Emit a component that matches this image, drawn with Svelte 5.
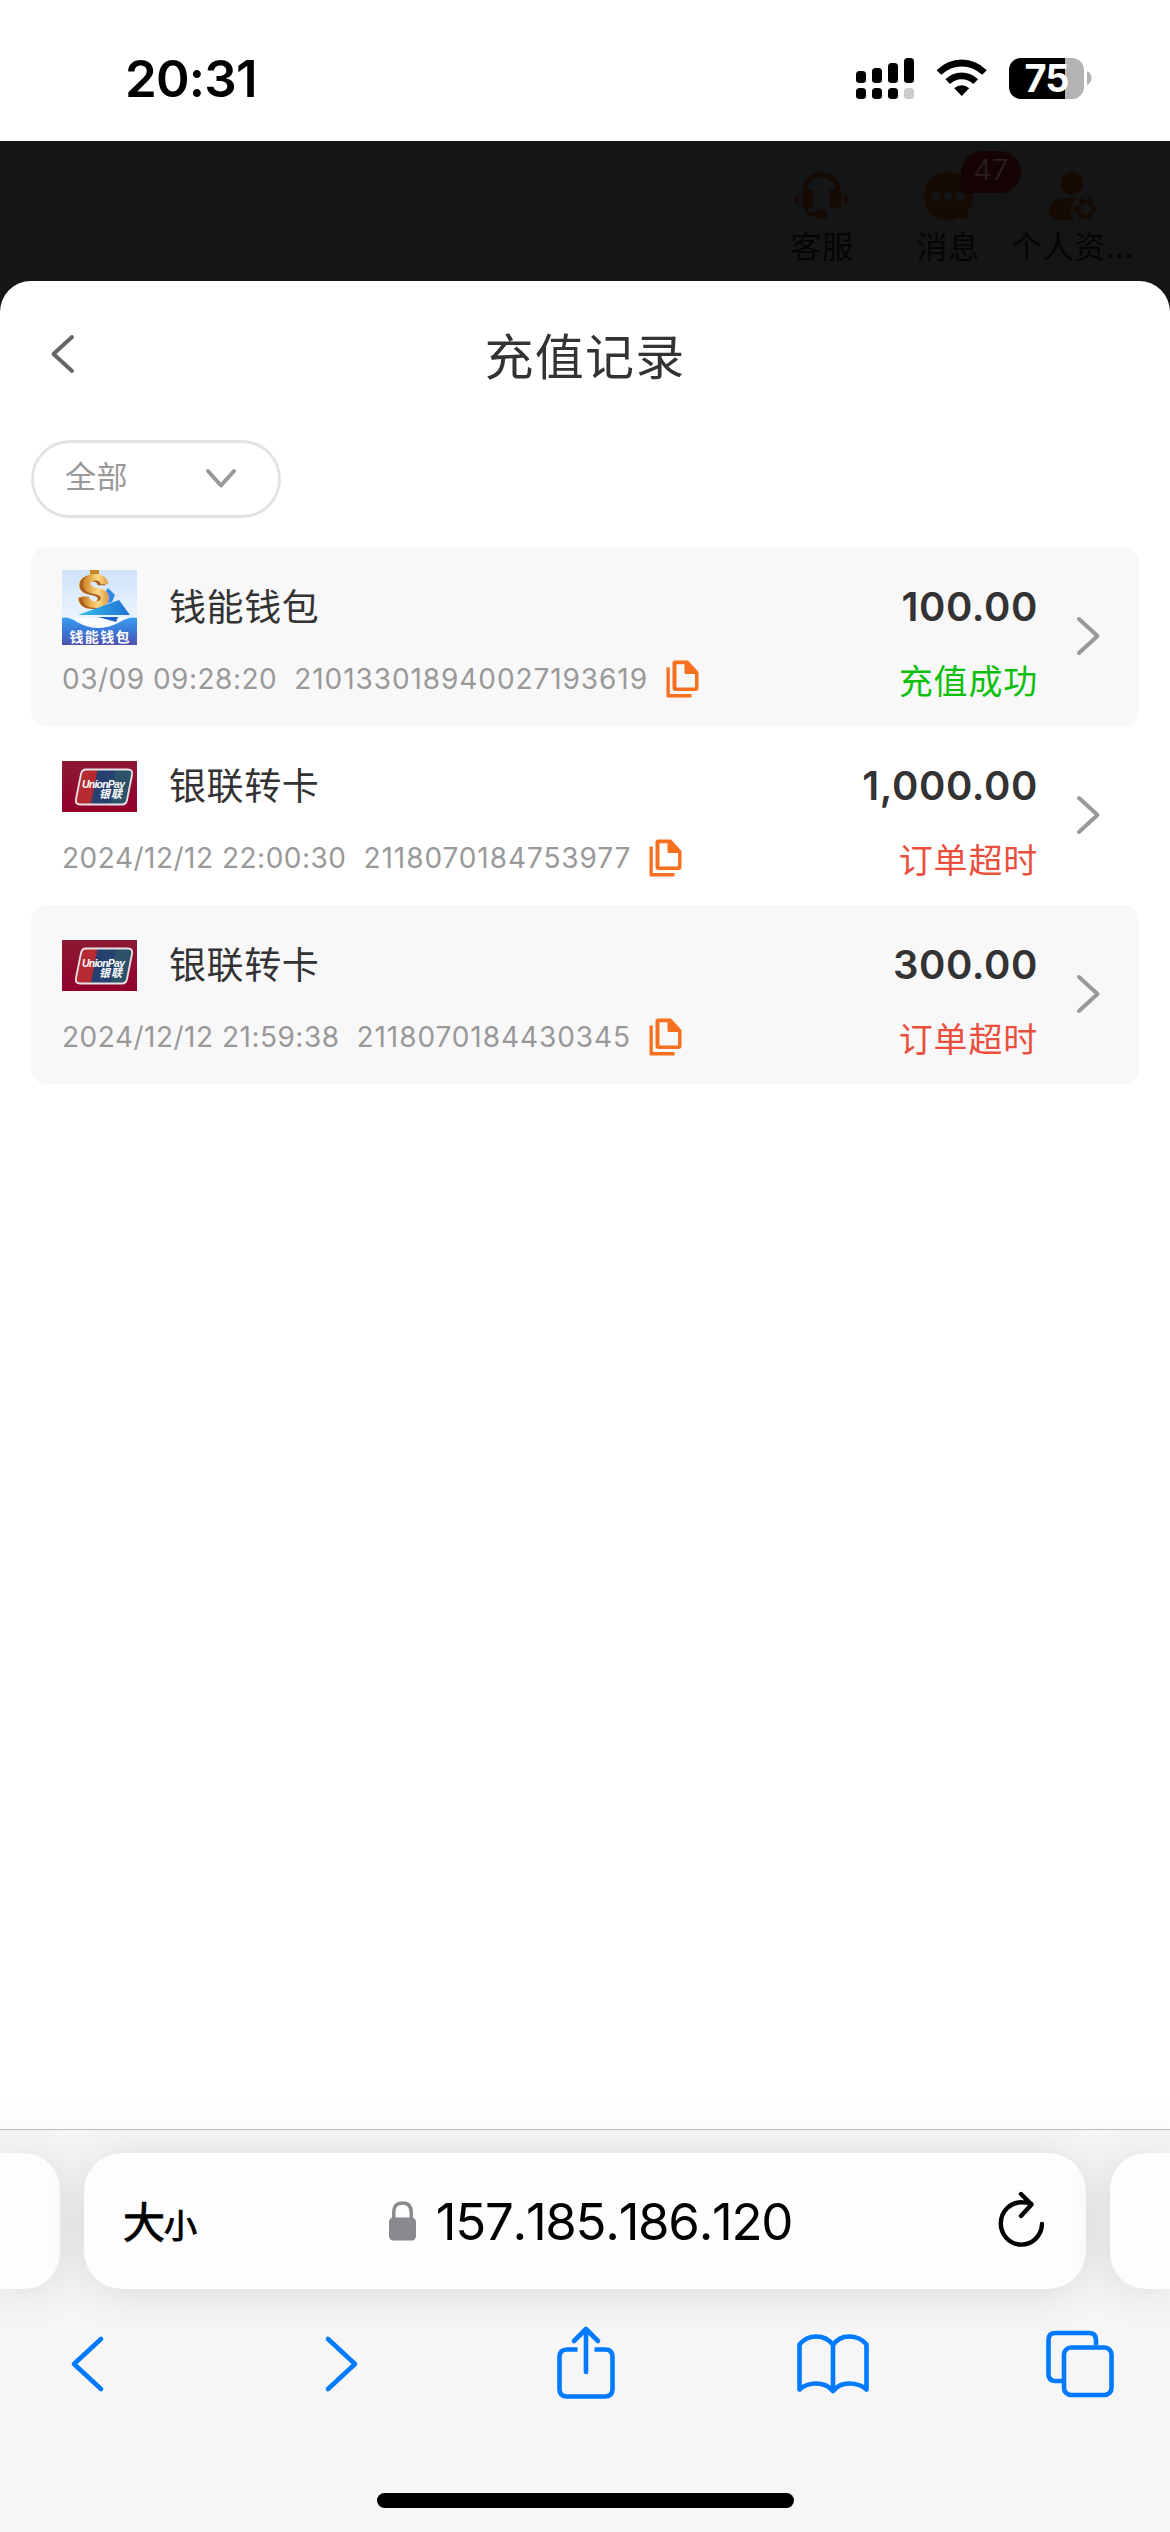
<script>
  const records = [
    { kind: 'wallet', name: '钱能钱包', time: '03/09 09:28:20', order: '210133018940027193619', amount: '100.00', status: '充值成功', ok: true },
    { kind: 'union', name: '银联转卡', time: '2024/12/12 22:00:30', order: '2118070184753977', amount: '1,000.00', status: '订单超时', ok: false },
    { kind: 'union', name: '银联转卡', time: '2024/12/12 21:59:38', order: '2118070184430345', amount: '300.00', status: '订单超时', ok: false }
  ];
</script>

<div class="screen">
  <header class="statusbar">
    <span class="clock">20:31</span>
    <div class="indicators">
      <svg class="signal" width="58" height="41" viewBox="0 0 58 41">
        <rect x="0" y="13" width="10" height="12" rx="3.5" />
        <rect x="16" y="10" width="10" height="15" rx="3.5" />
        <rect x="32" y="5" width="10" height="20" rx="3.5" />
        <rect x="48" y="0" width="10" height="25" rx="3.5" />
        <rect x="0" y="30" width="10" height="11" rx="3.5" />
        <rect x="16" y="30" width="10" height="11" rx="3.5" />
        <rect x="32" y="30" width="10" height="11" rx="3.5" />
        <rect x="48" y="30" width="10" height="11" rx="3.5" fill="#ccc" />
      </svg>
      <svg class="wifi" width="52" height="38" viewBox="0 0 52 38">
        <path d="M0.6 11.2Q11.5 0.6 25.7 0.6T50.8 11.2L46.2 15.8Q37 7.4 25.7 7.4T5.2 15.8Z" />
        <path d="M9.4 20.3Q16.3 13.6 25.7 13.6T42 20.3L37.4 25Q32.4 20.2 25.7 20.2T14 25Z" />
        <path d="M18.2 29.2Q21.5 26.2 25.7 26.2T33.2 29.2L25.7 37Z" />
      </svg>
      <div class="battery">
        <div class="cell"><span>75</span></div>
        <svg width="5" height="14" viewBox="0 0 5 14"><path d="M0 0Q4.6 2.4 4.6 7T0 14Z" fill="#b3b3b3" /></svg>
      </div>
    </div>
  </header>

  <div class="backdrop">
    <div class="tool service">
      <svg width="56" height="50" viewBox="0 0 56 50">
        <path d="M8 26V21C8 8 16 0.5 27.5 0.5S47 8 47 21V35.500H38Q35.500 35.500 35.500 33V19Q35.500 17.500 38 17.500H42C41 10 36 5.500 27.500 5.500S14 10 13 17.500H17Q19.500 17.500 19.500 19V33Q19.500 36 17 36H14Q14.500 40 19 40H21.500Q23 37.500 28 37.500Q33.500 37.500 33.500 42.500Q33.500 47.500 28 47.500Q23 47.500 21.500 44H18Q11 43.500 10.500 36H8Z" />
        <path d="M5 22V33Q0.500 32 0.500 27.500T5 22ZM50 22V33Q54.500 32 54.500 27.500T50 22Z" />
      </svg>
      <span>客服</span>
    </div>
    <div class="tool message">
      <svg width="48" height="50" viewBox="0 0 48 50">
        <path d="M24 .5A24 24 0 1 0 36 45Q40 48 44 46Q45 45 43.500 40A24 24 0 0 0 24 .5Z" />
        <circle class="hole" cx="12" cy="24.500" r="4.500" /><circle class="hole" cx="24" cy="24.500" r="4.500" /><circle class="hole" cx="36" cy="24.500" r="4.500" />
      </svg>
      <em class="badge">47</em>
      <span>消息</span>
    </div>
    <div class="tool profile">
      <svg width="48" height="50" viewBox="0 0 48 50">
        <circle cx="23" cy="11.500" r="11.200" />
        <path d="M0 40Q1 26 18 26H28Q22 30 22 38Q22 44 25 48H15Q0 48 0 40Z" />
        <path fill-rule="evenodd" d="M31 30L29.500 27.500L33 25.500L35 28H38L40 25.500L43.500 27.500L42.500 31L44 34H47.500V40H44L42.500 43L43.500 46L40 48L38 45.500H35L33 48L29.500 46L31 43L29 40H25V34H29ZM36.500 31.500A5.500 5.500 0 1 0 36.500 42.500A5.500 5.500 0 1 0 36.500 31.500Z" />
      </svg>
      <span>个人资...</span>
    </div>
  </div>

  <main class="sheet">
    <div class="titlebar">
      <svg class="back" width="25" height="40" viewBox="0 0 25 40"><path d="M22 3L3.500 20L22 37" /></svg>
      <h1>充值记录</h1>
    </div>

    <div class="filter">
      <span>全部</span>
      <svg width="32" height="22" viewBox="0 0 32 22"><path d="M3 3L16 17.500L29 3" /></svg>
    </div>

    <ul class="list">
      {#each records as r}
        <li>
          <div class="info">
            <div class="method">
              {#if r.kind === 'wallet'}
                <svg class="logo" width="75" height="75" viewBox="0 0 75 75">
                  <defs>
                    <linearGradient id="sky" x2="0" y2="1"><stop stop-color="#cfe3fb" /><stop offset="1" stop-color="#fafdff" /></linearGradient>
                    <linearGradient id="sea" x2="0" y2="1"><stop stop-color="#3a9df0" /><stop offset=".5" stop-color="#3b78d8" /><stop offset="1" stop-color="#5150ae" /></linearGradient>
                    <linearGradient id="gold"><stop stop-color="#b8661c" /><stop offset=".35" stop-color="#e9b04c" /><stop offset=".6" stop-color="#fbd98a" /><stop offset="1" stop-color="#d48f2a" /></linearGradient>
                    <linearGradient id="plane"><stop stop-color="#35c0ea" /><stop offset="1" stop-color="#1f6fd6" /></linearGradient>
                  </defs>
                  <rect width="75" height="75" fill="url(#sky)" />
                  <path d="M40 26L46 18L53 25L50 32L40 35Z" fill="#2a8be0" />
                  <path d="M28 0H37V6H28Z" fill="#c98528" />
                  <text class="coin" x="15" y="39" fill="#a95c1c">S</text>
                  <text class="coin" x="18" y="38" fill="url(#gold)">S</text>
                  <path d="M16 45L57 30L68 45Z" fill="url(#plane)" />
                  <path d="M0 48Q6 46 15 52Q36 64 58 52Q68 46 75 48V75H0Z" fill="url(#sea)" />
                  <path d="M13 48H62Q56 53 48 55.500Q36 59 24 55Q18 52 13 48Z" fill="#fafdff" />
                  <path d="M36 47H56L54 52Z" fill="#1c62c8" />
                  <text class="brand" x="7.500" y="71.500" textLength="60">钱能钱包</text>
                </svg>
              {:else}
                <svg class="logo" width="75" height="75" viewBox="0 0 75 75">
                  <defs>
                    <linearGradient id="crimson" x2="0" y2="1"><stop stop-color="#8c1a32" /><stop offset="1" stop-color="#92002c" /></linearGradient>
                    <clipPath id="plate"><path d="M24 21H66Q71 21 70 26L65 52Q64 56 60 56H18Q13 56 14 51L19 25Q20 21 24 21Z" /></clipPath>
                  </defs>
                  <rect y="12" width="75" height="51" fill="url(#crimson)" />
                  <g clip-path="url(#plate)">
                    <rect x="10" y="18" width="64" height="42" fill="#26406f" />
                    <path d="M10 18H36L28 60H10Z" fill="#b52b31" />
                    <path d="M54 18H76V60H48Z" fill="#2b5268" />
                  </g>
                  <path d="M24 20.500H66Q71 20.500 70 26L65 51Q64 55.500 60 55.500H18Q13 55.500 14 50L19 25Q20 20.500 24 20.500Z" fill="none" stroke="#e8e3e6" stroke-width="1.800" />
                  <text class="up" x="20" y="38.500" textLength="43">UnionPay</text>
                  <text class="upcn" x="37" y="49" textLength="23">银联</text>
                </svg>
              {/if}
              <strong>{r.name}</strong>
            </div>
            <div class="meta">
              <span class="time">{r.time}</span>
              <span class="order">{r.order}</span>
              <svg width="33" height="38" viewBox="0 0 33 38">
                <path fill-rule="evenodd" d="M9 .5H22L32.500 12V28Q32.500 31 29.500 31H9.500Q6.500 31 6.500 28V3Q6.500 .5 9 .5ZM10.500 4.300V27Q10.500 27.500 11 27.500H28.500Q29 27.500 29 27V14H20Q18.500 14 18.500 12.500V4.300Z" />
                <path d="M.5 7.500H3.800V34H25.500V37.500H2Q.5 37.500 .5 36Z" />
              </svg>
            </div>
          </div>
          <div class="result">
            <b>{r.amount}</b>
            <span class:ok={r.ok}>{r.status}</span>
          </div>
          <svg class="more" width="26" height="40" viewBox="0 0 26 40"><path d="M3 3L21.500 20L3 37" /></svg>
        </li>
      {/each}
    </ul>
  </main>

  <footer class="browser">
    <div class="tabs">
      <div class="side"></div>
      <div class="address">
        <span class="aa">大<small>小</small></span>
        <div class="host">
          <svg width="27" height="40" viewBox="0 0 27 40">
            <path d="M4.800 19V11.500Q4.800 2 13.500 2T22.200 11.500V19" fill="none" stroke="#8a898e" stroke-width="3.400" />
            <rect y="16.500" width="27" height="23" rx="4.500" fill="#8a898e" />
          </svg>
          <span>157.185.186.120</span>
        </div>
        <svg class="reload" width="46" height="56" viewBox="0 0 46 56">
          <path d="M32 12.600Q28 11.200 23 11.200A20.600 21.200 0 1 0 43 33M22 3L32.500 13.500L22 25" />
        </svg>
      </div>
      <div class="side"></div>
    </div>
    <nav class="toolbar">
      <svg class="prev" width="34" height="58" viewBox="0 0 34 58"><path d="M31 4L4 29L31 54" /></svg>
      <svg class="next" width="34" height="58" viewBox="0 0 34 58"><path d="M3 4L30 29L3 54" /></svg>
      <svg class="share" width="58" height="74" viewBox="0 0 58 74">
        <path d="M20.500 23.500H10Q2.500 23.500 2.500 31V63Q2.500 70.500 10 70.500H48Q55.500 70.500 55.500 63V31Q55.500 23.500 48 23.500H37.500" stroke-linecap="butt" />
        <path d="M29 46V4M17 15L29 3L41 15" />
      </svg>
      <svg class="book" width="72" height="62" viewBox="0 0 72 62">
        <path d="M36 12Q30 3.500 19 3.500Q9 3.500 2.500 11.500V56.500Q9 50.500 19 50.500Q30 50.500 36 58Q42 50.500 52 50.500Q63 50.500 69.500 56.500V11.500Q63 3.500 52 3.500Q42 3.500 36 12V57" />
      </svg>
      <svg class="pages" width="68" height="68" viewBox="0 0 68 68">
        <path d="M50 15V10Q50 3 43 3H9.500Q2.500 3 2.500 10V44Q2.500 51 9.500 51H16" stroke-linecap="butt" />
        <rect x="18" y="17.500" width="47.500" height="47.500" rx="7" />
      </svg>
    </nav>
    <div class="home"></div>
  </footer>
</div>

<style>
  :global(body) { margin: 0; }
  .screen {
    width: 1170px;
    height: 2532px;
    display: flex;
    flex-direction: column;
    overflow: hidden;
    background: #fff;
    font-family: Inter, "Noto Sans CJK SC", sans-serif;
  }
  svg { display: block; flex: none; overflow: visible; }

  .statusbar {
    height: 141px;
    box-sizing: border-box;
    padding: 15px 78px 0 125px;
    display: flex;
    align-items: center;
    justify-content: space-between;
  }
  .clock { font-size: 51px; font-weight: 600; letter-spacing: -0.8px; }
  .indicators { display: flex; align-items: center; }
  .wifi { margin: 0 21px 0 22px; }
  .battery { display: flex; align-items: center; gap: 3px; }
  .cell {
    width: 75px;
    height: 41px;
    border-radius: 12px;
    background: linear-gradient(90deg, #000 56px, #b3b3b3 56px);
    color: #fff;
    font-size: 38px;
    font-weight: 700;
    line-height: 41px;
    text-align: center;
    letter-spacing: -1px;
  }

  .backdrop {
    height: 170px;
    margin-bottom: -30px;
    box-sizing: border-box;
    flex: none;
    display: flex;
    justify-content: flex-end;
    padding: 31px 36px 0 0;
    background: linear-gradient(90deg, #141617 65%, #151515 78%);
  }
  .tool {
    position: relative;
    width: 126px;
    display: flex;
    flex-direction: column;
    align-items: center;
    fill: #160a04;
    color: #050505;
    font-size: 31px;
    line-height: 46px;
    letter-spacing: 0.5px;
    white-space: nowrap;
  }
  .tool span { margin-top: 2px; }
  .profile { width: 123px; }
  .hole { fill: #151515; }
  .badge {
    position: absolute;
    left: 76px;
    top: -21px;
    width: 60px;
    height: 42px;
    border-radius: 21px 21px 21px 0;
    background: #160405;
    color: #2a2020;
    font-size: 29px;
    font-style: normal;
    font-weight: 300;
    line-height: 38px;
    text-align: center;
  }

  .sheet {
    height: 1848px;
    flex: none;
    box-sizing: border-box;
    padding: 0 31px;
    border-radius: 31px 31px 0 0;
    background: linear-gradient(#fff 98%, #fcfcfc);
    color: #333;
  }
  .titlebar { height: 159px; display: grid; grid-template-columns: 60px 1fr 60px; }
  .back { margin: 53px 0 0 19px; fill: none; stroke: #666; stroke-width: 4; stroke-linecap: round; stroke-linejoin: round; }
  h1 { margin: 0; font-size: 49px; font-weight: 400; line-height: 154px; text-align: center; letter-spacing: 1.2px; }

  .filter {
    width: 250px;
    height: 78px;
    box-sizing: border-box;
    border: 3px solid #e3e3e3;
    border-radius: 39px;
    padding: 0 41px 0 31px;
    display: flex;
    align-items: center;
    justify-content: space-between;
    color: #999;
    font-size: 31px;
    line-height: 70px;
    letter-spacing: 0.5px;
  }
  .filter span { padding-bottom: 4px; }
  .filter svg { fill: none; stroke: #999; stroke-width: 4; stroke-linecap: round; stroke-linejoin: round; }

  .list { list-style: none; margin: 29px 0 0; padding: 0; }
  li {
    height: 179px;
    box-sizing: border-box;
    padding: 0 37px 0 31px;
    border-radius: 15px;
    display: flex;
  }
  li:nth-child(odd) { background: #f8f8f8; }
  .info { flex: 1; padding-top: 23px; }
  .method { height: 75px; display: flex; align-items: center; gap: 32px; }
  strong { font-size: 37px; font-weight: 400; line-height: 60px; letter-spacing: 0.6px; }
  .meta { height: 60px; margin-top: 4px; display: flex; align-items: center; color: #999; font-size: 28px; white-space: pre; }
  .time { margin-right: 17px; letter-spacing: 0.5px; }
  .order { margin-right: 18px; letter-spacing: 0.92px; }
  .meta svg { fill: #f6701f; }
  .result { padding-top: 30px; display: flex; flex-direction: column; align-items: flex-end; }
  .result b { font-size: 40px; font-weight: 600; line-height: 60px; letter-spacing: 0.6px; }
  .result span { margin-top: 20px; font-size: 34px; line-height: 50px; letter-spacing: 0.8px; color: #ea4e3d; }
  .result .ok { color: #0cbf0c; }
  .more { margin: 69px 0 0 38px; fill: none; stroke: #999; stroke-width: 4; stroke-linecap: round; stroke-linejoin: round; }

  .coin { font: 800 46px Inter, sans-serif; }
  .brand { font: 700 14px "Noto Sans CJK SC", sans-serif; fill: #fff; }
  .up { font: italic 700 10.5px "Liberation Sans", sans-serif; fill: #fff; }
  .upcn { font: italic 700 11px "Noto Sans CJK SC", sans-serif; fill: #fff; }

  .browser {
    flex: 1;
    box-sizing: border-box;
    border-top: 1px solid #b8b8b8;
    overflow: hidden;
    background: #f6f6f6;
    display: flex;
    flex-direction: column;
    align-items: center;
  }
  .tabs { width: 1170px; height: 136px; margin-top: 23px; display: flex; gap: 24px; }
  .side, .address { background: #fdfdfd; box-shadow: 0 3px 46px rgba(0, 0, 0, 0.12); }
  .side { flex: 1; border-radius: 0 36px 36px 0; }
  .side:last-child { border-radius: 36px 0 0 36px; }
  .address {
    width: 1002px;
    box-sizing: border-box;
    padding: 0 41px 0 39px;
    border-radius: 38px;
    display: flex;
    align-items: center;
    justify-content: space-between;
  }
  .aa { font-size: 42px; line-height: 60px; -webkit-text-stroke: 1px #000; padding-top: 7px; }
  .aa small { font-size: 33px; margin-left: -1px; }
  .host { display: flex; align-items: center; gap: 20px; margin-right: 15px; font-size: 51px; font-kerning: none; letter-spacing: -1.3px; }
  .reload { margin-top: -4px; fill: none; stroke: #000; stroke-width: 4.4; stroke-linecap: round; stroke-linejoin: round; }
  .toolbar {
    width: 1170px;
    height: 74px;
    margin-top: 38px;
    box-sizing: border-box;
    padding-left: 70px;
    display: flex;
    align-items: center;
    fill: none;
    stroke: #007aff;
    stroke-width: 4.6;
    stroke-linecap: round;
    stroke-linejoin: round;
  }
  .next { margin-left: 221px; }
  .share { margin: 0 0 3px 198px; }
  .book { margin-left: 182px; }
  .pages { margin-left: 177px; }
  .home { width: 417px; height: 15px; margin-top: 92px; border-radius: 8px; background: #000; }
</style>
